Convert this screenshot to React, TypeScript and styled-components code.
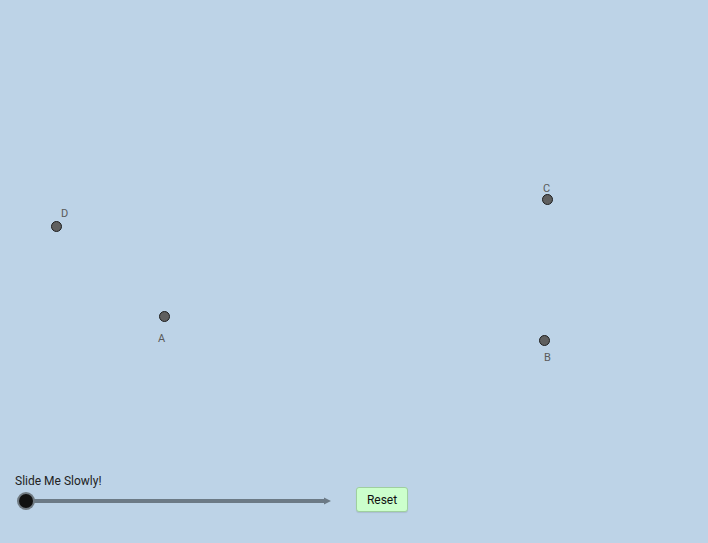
import React from 'react';
import styled, { createGlobalStyle } from 'styled-components';

const GlobalStyle = createGlobalStyle`
  html, body {
    margin: 0;
    padding: 0;
    background: #bdd3e7;
  }
  body {
    font-family: Roboto, "Liberation Sans", sans-serif;
  }
`;

const Canvas = styled.div`
  position: relative;
  width: 708px;
  height: 543px;
  background: #bdd3e7;
  overflow: hidden;
`;

const Dot = styled.div<{ x: number; y: number }>`
  position: absolute;
  left: ${(p) => p.x - 5.5}px;
  top: ${(p) => p.y - 5}px;
  width: 9px;
  height: 9px;
  border-radius: 50%;
  background: #5f5f5f;
  border: 1px solid #1e1e1e;
`;

const Label = styled.span<{ x: number; y: number }>`
  position: absolute;
  left: ${(p) => p.x}px;
  top: ${(p) => p.y + 1}px;
  font-size: 11px;
  line-height: 11px;
  color: #5a5a5a;
`;

const SliderBox = styled.div`
  position: absolute;
  left: 15px;
  top: 474px;
  display: flex;
  flex-direction: column;
  gap: 2px;
`;

const SliderCaption = styled.span`
  font-size: 12px;
  line-height: 14px;
  color: #222;
`;

const ResetButton = styled.button`
  position: absolute;
  left: 356px;
  top: 487px;
  width: 52px;
  height: 25px;
  padding: 0;
  background: #ccffcc;
  border: 1px solid #9fcf9f;
  border-radius: 3px;
  font-family: Roboto, "Liberation Sans", sans-serif;
  font-size: 12px;
  color: #111;
  box-shadow: 0 1px 1px rgba(0, 0, 0, 0.1);
`;

const points = [
  { name: 'D', x: 56, y: 226, lx: 61, ly: 207 },
  { name: 'A', x: 164, y: 316, lx: 158, ly: 332 },
  { name: 'C', x: 547, y: 199, lx: 543, ly: 182 },
  { name: 'B', x: 544, y: 340, lx: 544, ly: 351 },
];

const Slider = () => (
  <SliderBox>
    <SliderCaption>Slide Me Slowly!</SliderCaption>
    <svg width="320" height="22" viewBox="0 0 320 22">
      <line x1="11" y1="11" x2="310" y2="11" stroke="#6c7a86" strokeWidth="4" />
      <polygon points="309,7.5 316,11 309,14.5" fill="#6c7a86" />
      <circle cx="11" cy="11" r="9" fill="#707a82" />
      <circle cx="11" cy="11" r="7" fill="#111" />
    </svg>
  </SliderBox>
);

const App = () => (
  <>
    <GlobalStyle />
    <Canvas>
      {points.map((p) => (
        <React.Fragment key={p.name}>
          <Dot x={p.x} y={p.y} />
          <Label x={p.lx} y={p.ly}>
            {p.name}
          </Label>
        </React.Fragment>
      ))}
      <Slider />
      <ResetButton type="button">Reset</ResetButton>
    </Canvas>
  </>
);

export default App;
